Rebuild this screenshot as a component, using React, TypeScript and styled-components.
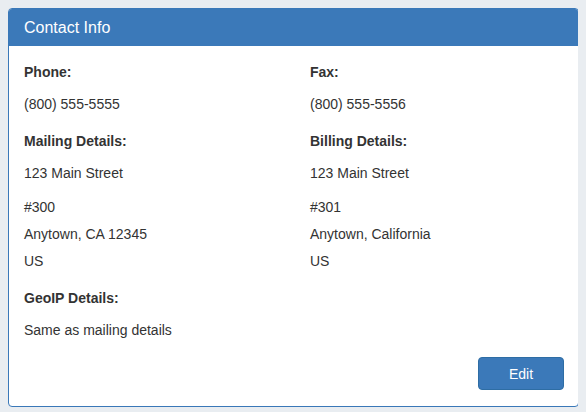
import styled, { createGlobalStyle } from "styled-components";

const GlobalStyle = createGlobalStyle`
  body {
    margin: 8px;
    background: #e9edf1;
    font-family: "Liberation Sans", Arial, sans-serif;
    color: #333;
  }
`;

type Field = { label: string; lines: string[] };

const left: Field[] = [
  { label: "Phone:", lines: ["(800) 555-5555"] },
  { label: "Mailing Details:", lines: ["123 Main Street", "#300", "Anytown, CA 12345", "US"] },
  { label: "GeoIP Details:", lines: ["Same as mailing details"] },
];
const right: Field[] = [
  { label: "Fax:", lines: ["(800) 555-5556"] },
  { label: "Billing Details:", lines: ["123 Main Street", "#301", "Anytown, California", "US"] },
];

const FieldBlock = ({ field }: { field: Field }) => (
  <Block>
    <Label>{field.label}</Label>
    {field.lines.map((line, i) => (
      <Value key={i} first={i === 0} single={field.lines.length === 1}>
        {line}
      </Value>
    ))}
  </Block>
);

const App = () => {
  return (
    <>
      <GlobalStyle />
      <Panel>
        <Header>Contact Info</Header>
        <Body>
          <Columns>
            <Column>
              {left.map((f) => (
                <FieldBlock key={f.label} field={f} />
              ))}
            </Column>
            <Column>
              {right.map((f) => (
                <FieldBlock key={f.label} field={f} />
              ))}
            </Column>
          </Columns>
          <Footer>
            <EditButton>Edit</EditButton>
          </Footer>
        </Body>
      </Panel>
    </>
  );
};

const Panel = styled.div`
  width: 571px;
  box-sizing: border-box;
  background: #fff;
  border: 1px solid #3a78b8;
  border-radius: 4px;
  overflow: hidden;
`;
const Header = styled.div`
  height: 37px;
  background: #3b79b9;
  color: #fff;
  font-size: 16px;
  line-height: 37px;
  padding: 0 15px;
`;
const Body = styled.div`
  padding: 16px 14px 16px 15px;
`;
const Columns = styled.div`
  display: grid;
  grid-template-columns: 286px 1fr;
`;
const Column = styled.div`
  display: flex;
  flex-direction: column;
`;
const Block = styled.div`
  margin-bottom: 17px;
`;
const Label = styled.div`
  font-size: 14px;
  font-weight: bold;
  line-height: 20px;
  margin-bottom: 12px;
`;
const Value = styled.div<{ first: boolean; single: boolean }>`
  font-size: 14px;
  line-height: 20px;
  margin-bottom: ${({ first, single }) => (single ? "0" : first ? "14px" : "7px")};
  &:last-child {
    margin-bottom: 0;
  }
`;
const Footer = styled.div`
  display: flex;
  justify-content: flex-end;
`;
const EditButton = styled.button`
  width: 86px;
  height: 33px;
  background: #3b79b9;
  border: 1px solid #2e6da4;
  border-radius: 4px;
  color: #fff;
  font-family: "Liberation Sans", Arial, sans-serif;
  font-size: 14px;
  cursor: pointer;
`;

export default App;
